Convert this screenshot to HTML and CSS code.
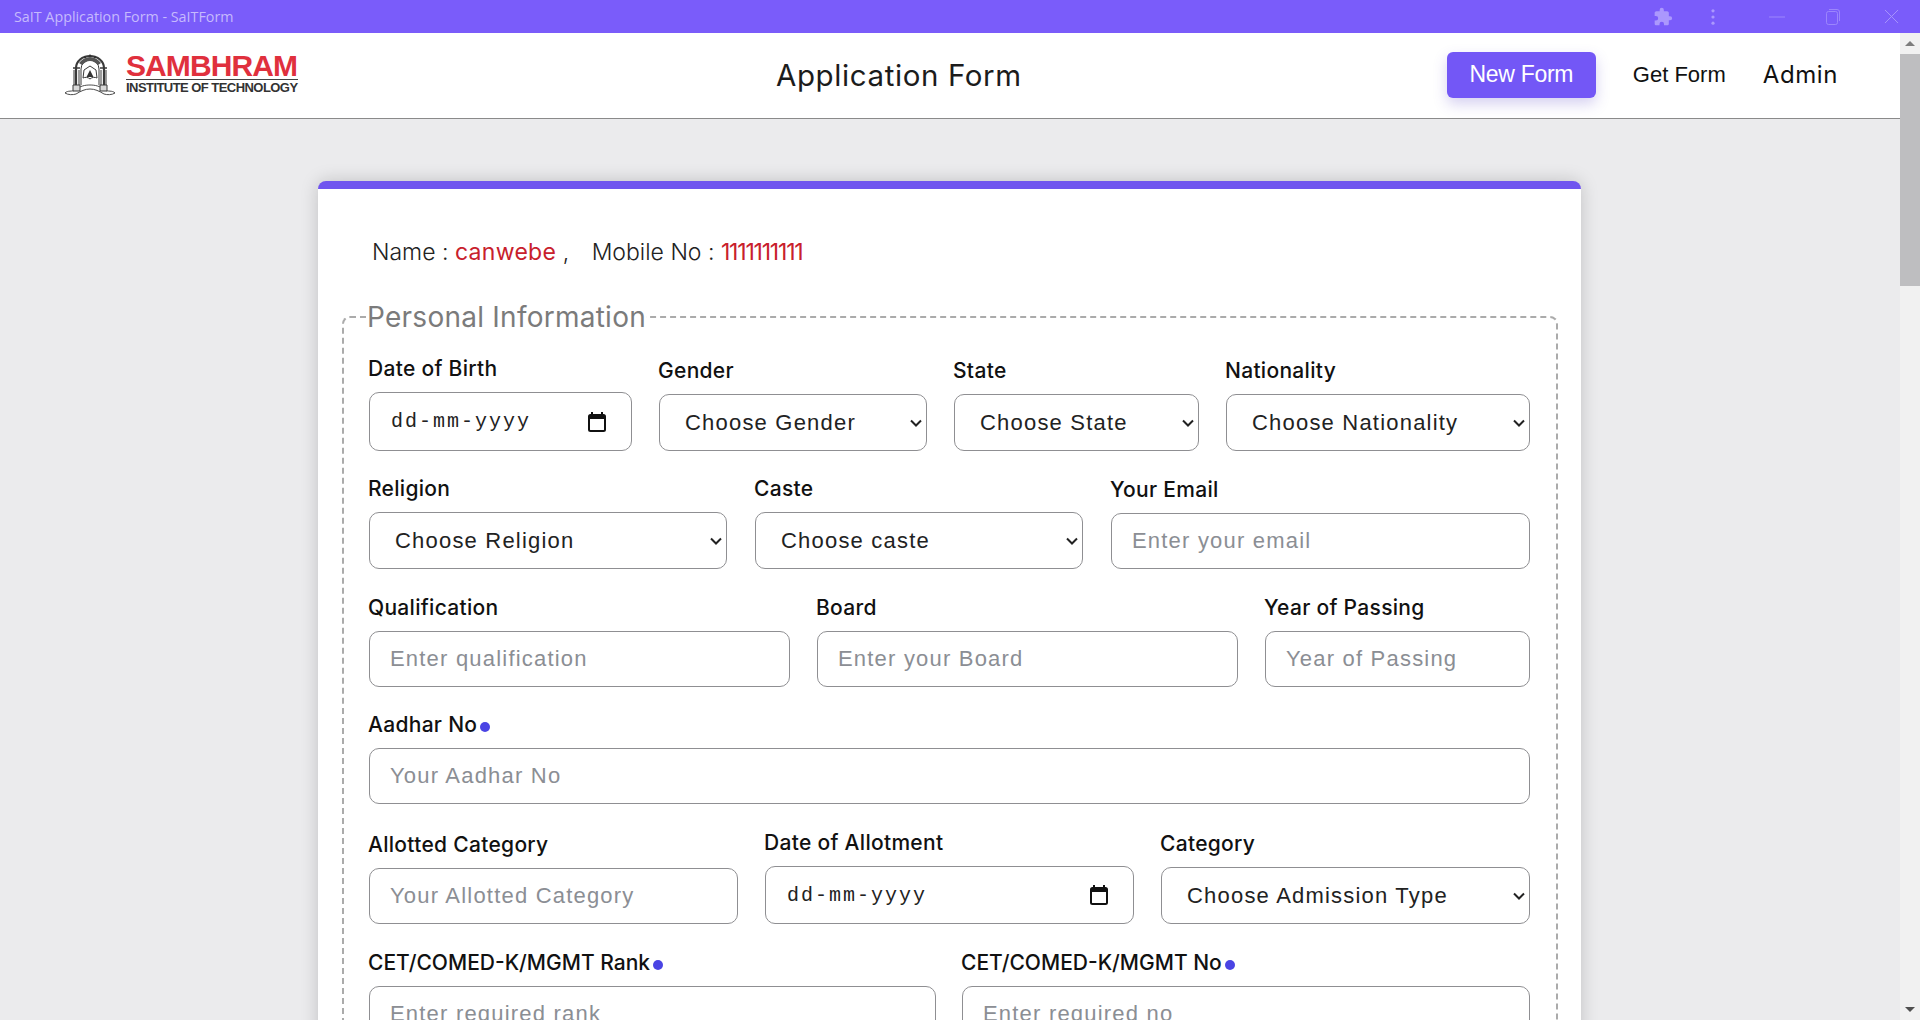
FILE: index.html
```html
<!DOCTYPE html>
<html lang="en">

<head>
  <meta charset="UTF-8">
  <meta name="viewport" content="width=device-width, initial-scale=1.0">
  <title>SaIT Application Form - SaITForm</title>
  <link rel="stylesheet" href="styles.css">
</head>

<body>
  <div class="titlebar">
    <span class="titlebar-text">SaIT Application Form - SaITForm</span>
    <div class="titlebar-icons">
      <svg class="ico-puzzle" viewBox="0 0 24 24" width="20" height="20">
        <path d="M20.5 11H19V7c0-1.1-.9-2-2-2h-4V3.5a2.5 2.5 0 0 0-5 0V5H4c-1.1 0-2 .9-2 2v3.8h1.5a2.7 2.7 0 0 1 0 5.4H2V20c0 1.100.9 2 2 2h3.800v-1.500a2.700 2.700 0 0 1 5.400 0V22H17c1.100 0 2-.9 2-2v-4h1.500a2.500 2.500 0 0 0 0-5z" fill="#ab98fd" />
      </svg>
      <svg class="ico-dots" viewBox="0 0 4 18" width="4" height="16">
        <circle cx="2" cy="2" r="1.800" fill="#ab98fd" />
        <circle cx="2" cy="9" r="1.800" fill="#ab98fd" />
        <circle cx="2" cy="16" r="1.800" fill="#ab98fd" />
      </svg>
      <svg class="ico-min" viewBox="0 0 16 2" width="16" height="2">
        <path d="M0 1h16" stroke="#9c86fc" stroke-width="1" />
      </svg>
      <svg class="ico-max" viewBox="0 0 14 16" width="14" height="16">
        <rect x="0.500" y="2.500" width="11" height="13" rx="2" fill="none" stroke="#9c86fc" />
        <path d="M3 0.500h8a2.500 2.500 0 0 1 2.500 2.500v9" fill="none" stroke="#9c86fc" />
      </svg>
      <svg class="ico-close" viewBox="0 0 16 16" width="15" height="15">
        <path d="M1 1l14 14M15 1L1 15" stroke="#a995fd" stroke-width="1" />
      </svg>
    </div>
  </div>

  <div class="window">
    <div class="page">
      <header class="topnav">
        <div class="logo">
          <svg class="emblem" viewBox="0 0 52 42" width="52" height="42">
            <g fill="none" stroke="#3a3a3a" stroke-width="1">
              <path d="M12 32V14a14 12 0 0 1 28 0v18" stroke-width="2.200" />
              <path d="M17 31V15a9 9 0 0 1 18 0v16" />
              <path d="M9 14h7M36 14h7" stroke-width="1.500" />
              <path d="M10 16v15M15 16v15M37 16v15M42 16v15" />
              <path d="M19 24c2-1 5-1 7 1 2-2 5-2 7-1l-1-8-6-4-6 4z" fill="#fff" />
              <path d="M1 39c3-3 7-1 10-3 5-4 10-5 15-5s10 1 15 5c3 2 7 0 10 3-3 2-8 2-11 1-5-3-9-5-14-5s-9 2-14 5c-3 1-8 1-11-1z" stroke-width="0.900" fill="#fff" />
              <path d="M9 31h7v6H9zM36 31h7v6h-7z" fill="#d8d8d8" />
            </g>
            <path d="M26 16l3.500 7h-7zM26 0l2 3h-4zM21 1.500l1.500 2.500h-3zM31 1.500l1.500 2.500h-3z" fill="#333" />
            <path d="M15 9c3-4 7-6 11-6s8 2 11 6l-3 2c-2-2-5-4-8-4s-6 2-8 4z" fill="#555" />
          </svg>
          <div class="logo-text">
            <span class="logo-name">SAMBHRAM</span>
            <span class="logo-sub">INSTITUTE OF TECHNOLOGY</span>
          </div>
        </div>
        <h1 class="page-title">Application Form</h1>
        <nav class="nav-links">
          <a class="btn-new">New Form</a>
          <a class="link-get">Get Form</a>
          <a class="link-admin">Admin</a>
        </nav>
      </header>

      <main class="card">
        <p class="who">
          Name : <span class="red">canwebe</span> ,
          <span class="who-mobile">Mobile No : <span class="red mobile-no">1111111111</span></span>
        </p>

        <fieldset class="group">
          <legend>Personal Information</legend>

          <div class="row row-1">
            <div class="field">
              <label>Date of Birth</label>
              <div class="date-box">
                <input type="text" value="dd-mm-yyyy">
                <svg viewBox="0 0 18 20" width="18" height="20">
                  <path d="M1 6h16M4 0v3M14 0v3" stroke="#111" stroke-width="2" />
                  <rect x="1" y="3" width="16" height="16" rx="1.500" fill="none" stroke="#111" stroke-width="2" />
                  <rect x="1" y="3" width="16" height="4" fill="#111" />
                </svg>
              </div>
            </div>
            <div class="field">
              <label>Gender</label>
              <select>
                <option>Choose Gender</option>
              </select>
            </div>
            <div class="field">
              <label>State</label>
              <select>
                <option>Choose State</option>
              </select>
            </div>
            <div class="field">
              <label>Nationality</label>
              <select>
                <option>Choose Nationality</option>
              </select>
            </div>
          </div>

          <div class="row row-2">
            <div class="field">
              <label>Religion</label>
              <select>
                <option>Choose Religion</option>
              </select>
            </div>
            <div class="field">
              <label>Caste</label>
              <select>
                <option>Choose caste</option>
              </select>
            </div>
            <div class="field">
              <label>Your Email</label>
              <input class="text-input" type="text" placeholder="Enter your email">
            </div>
          </div>

          <div class="row row-3">
            <div class="field">
              <label>Qualification</label>
              <input class="text-input" type="text" placeholder="Enter qualification">
            </div>
            <div class="field">
              <label>Board</label>
              <input class="text-input" type="text" placeholder="Enter your Board">
            </div>
            <div class="field">
              <label>Year of Passing</label>
              <input class="text-input" type="text" placeholder="Year of Passing">
            </div>
          </div>

          <div class="row">
            <div class="field">
              <label class="req">Aadhar No</label>
              <input class="text-input" type="text" placeholder="Your Aadhar No">
            </div>
          </div>

          <div class="row row-5">
            <div class="field">
              <label>Allotted Category</label>
              <input class="text-input" type="text" placeholder="Your Allotted Category">
            </div>
            <div class="field">
              <label>Date of Allotment</label>
              <div class="date-box">
                <input type="text" value="dd-mm-yyyy">
                <svg viewBox="0 0 18 20" width="18" height="20">
                  <path d="M1 6h16M4 0v3M14 0v3" stroke="#111" stroke-width="2" />
                  <rect x="1" y="3" width="16" height="16" rx="1.500" fill="none" stroke="#111" stroke-width="2" />
                  <rect x="1" y="3" width="16" height="4" fill="#111" />
                </svg>
              </div>
            </div>
            <div class="field">
              <label>Category</label>
              <select>
                <option>Choose Admission Type</option>
              </select>
            </div>
          </div>

          <div class="row row-6">
            <div class="field">
              <label class="req caps">CET/COMED-K/MGMT Rank</label>
              <input class="text-input" type="text" placeholder="Enter required rank">
            </div>
            <div class="field">
              <label class="req caps">CET/COMED-K/MGMT No</label>
              <input class="text-input" type="text" placeholder="Enter required no">
            </div>
          </div>
        </fieldset>
      </main>
    </div>

    <div class="scrollbar">
      <div class="scroll-arrow"><span class="arrow-up"></span></div>
      <div class="scroll-thumb"></div>
      <div class="scroll-track"></div>
      <div class="scroll-arrow"><span class="arrow-down"></span></div>
    </div>
  </div>
</body>

</html>
```
FILE: styles.css
```css
* {
  padding: 0;
  margin: 0;
  box-sizing: border-box;
}

body {
  font-family: "Inter", "Liberation Sans", sans-serif;
  width: 100vw;
  height: 100vh;
  overflow: hidden;
  background-color: #ebebed;
  display: flex;
  flex-direction: column;
}

.titlebar {
  height: 33px;
  flex: none;
  background-color: #7a5cfa;
  display: flex;
  justify-content: space-between;
  align-items: center;
  padding-left: 14px;
}

.titlebar-text {
  font-family: "Open Sans", sans-serif;
  font-size: 14.300px;
  color: #c6bafd;
}

.titlebar-icons {
  display: flex;
  align-items: center;
  height: 100%;
}

.ico-puzzle {
  margin-right: 38px;
}

.ico-dots {
  margin-right: 54px;
}

.ico-min {
  margin-right: 41px;
}

.ico-max {
  margin-right: 44px;
}

.ico-close {
  margin-right: 21px;
}

.window {
  flex: 1;
  display: flex;
  min-height: 0;
}

.page {
  flex: 1;
  overflow: hidden;
}

.topnav {
  height: 86px;
  background-color: white;
  border-bottom: 1px solid #8a8a8a;
  display: flex;
  align-items: center;
  padding: 0 62px 2px 64px;
}

.logo {
  display: flex;
  align-items: center;
  gap: 10px;
}

.logo-text {
  display: flex;
  flex-direction: column;
  width: 172px;
  margin-bottom: 1px;
}

.logo-name {
  font-family: "Liberation Sans", sans-serif;
  font-weight: bold;
  font-size: 30px;
  line-height: 26px;
  letter-spacing: -0.900px;
  color: #e0303d;
  border-bottom: 1px solid #444;
}

.logo-sub {
  font-family: "Liberation Sans", sans-serif;
  font-weight: bold;
  font-size: 13px;
  line-height: 15px;
  letter-spacing: -0.550px;
  color: #333;
  white-space: nowrap;
}

.page-title {
  font-weight: 400;
  font-size: 29.500px;
  letter-spacing: 0.600px;
  color: #1c1c1c;
  white-space: nowrap;
  margin-left: 478px;
}

.nav-links {
  display: flex;
  align-items: center;
  margin-left: auto;
}

.btn-new {
  font-family: "Liberation Sans", sans-serif;
  width: 149px;
  height: 46px;
  display: flex;
  justify-content: center;
  align-items: center;
  background-color: #7357f6;
  color: white;
  font-size: 23px;
  letter-spacing: -0.300px;
  border-radius: 6px;
  box-shadow: 0 6px 14px rgba(90, 70, 200, 0.250);
}

.link-get {
  font-family: "Liberation Sans", sans-serif;
  font-size: 22px;
  color: #111;
  margin-left: 37px;
}

.link-admin {
  font-size: 24px;
  letter-spacing: 0.600px;
  color: #111;
  margin-left: 37px;
}

.card {
  margin: 62px 319px 0 318px;
  background-color: white;
  border-top: 8px solid #7055ef;
  border-radius: 8px 8px 0 0;
  box-shadow: 0 0 18px rgba(0, 0, 0, 0.180);
  padding: 49px 23px 0 24px;
}

.who {
  font-weight: 300;
  font-size: 23px;
  line-height: 28px;
  color: #222;
  padding-left: 30px;
  margin-bottom: 35px;
}

.red {
  color: #c8202c;
  font-weight: 400;
  letter-spacing: 0.300px;
}

.mobile-no {
  letter-spacing: -1.200px;
}

.who-mobile {
  margin-left: 16px;
}

.group {
  border: 2px dashed #ababab;
  border-radius: 8px;
  padding: 0 26px 0 25px;
}

.group legend {
  font-size: 28px;
  line-height: 32px;
  letter-spacing: 0.250px;
  margin-left: -2px;
  color: #7b7b7b;
}

.row {
  display: grid;
  grid-template-columns: 1fr;
  column-gap: 27px;
  align-items: end;
  margin-bottom: 27px;
}

.row-1 {
  grid-template-columns: 263px 268px 245px 304px;
  margin-top: 24px;
  margin-bottom: 26px;
}

.row-2 {
  grid-template-columns: 358px 328px 419px;
  column-gap: 28px;
}

.row-3 {
  grid-template-columns: 421px 421px 265px;
  margin-bottom: 26px;
}

.row-5 {
  grid-template-columns: 369px 369px 369px;
}

.row-5 .date-box {
  height: 58px;
}

.row-6 {
  grid-template-columns: 567px 568px;
  column-gap: 26px;
}

.field {
  display: flex;
  flex-direction: column;
}

.field label {
  font-size: 21px;
  font-weight: 500;
  line-height: 24px;
  letter-spacing: 0.300px;
  margin-bottom: 11px;
  margin-left: -1px;
  color: #111;
}

.field .caps {
  letter-spacing: 0;
}

.req::after {
  content: "";
  display: inline-block;
  width: 10px;
  height: 10px;
  margin-left: 3px;
  border-radius: 50%;
  background-color: #4a44e4;
}

select,
.text-input,
.date-box {
  width: 100%;
  border: 1px solid #8f8f92;
  border-radius: 10px;
  background-color: white;
  font-family: "Liberation Sans", sans-serif;
  font-size: 22px;
  letter-spacing: 1.200px;
  color: #222;
  outline: none;
}

select {
  height: 57px;
  padding: 0 0 0 25px;
  appearance: none;
  background-image: url("data:image/svg+xml,%3Csvg xmlns='http://www.w3.org/2000/svg' width='12' height='8'%3E%3Cpath d='M1 1.500l5 5 5-5' fill='none' stroke='%23222' stroke-width='2'/%3E%3C/svg%3E");
  background-repeat: no-repeat;
  background-position: right 4px center;
}

.text-input {
  height: 56px;
  padding: 0 20px;
}

.text-input::placeholder {
  color: #8b8e94;
  opacity: 1;
}

.date-box {
  height: 59px;
  display: flex;
  align-items: center;
  padding: 0 25px 0 21px;
}

.date-box input {
  flex: 1;
  min-width: 0;
  border: none;
  outline: none;
  background: none;
  font-family: "Liberation Mono", monospace;
  font-size: 20px;
  letter-spacing: 2px;
  color: #222;
}

.scrollbar {
  width: 20px;
  flex: none;
  background-color: #f1f1f1;
  display: flex;
  flex-direction: column;
}

.scroll-arrow {
  height: 21px;
  display: flex;
  justify-content: center;
  align-items: center;
}

.arrow-up {
  border-left: 5px solid transparent;
  border-right: 5px solid transparent;
  border-bottom: 5px solid #7d7d7d;
}

.arrow-down {
  border-left: 5px solid transparent;
  border-right: 5px solid transparent;
  border-top: 5px solid #505050;
}

.scroll-thumb {
  height: 232px;
  background-color: #bebec0;
}

.scroll-track {
  flex: 1;
}
```
